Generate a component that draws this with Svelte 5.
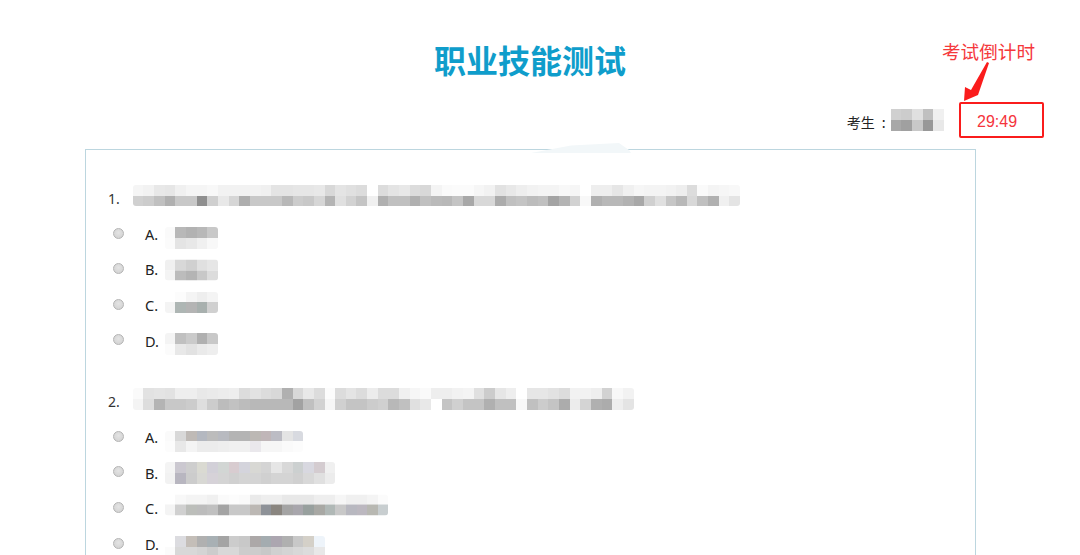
<script lang="ts">
  // mosaic cells are 2-digit greys, or 6-digit hex for the tinted ones
  const questions = [
    {
      no: '1.',
      top: 'f5 f2 e8 e6 f0 f5 f5 f8 f2 f2 f2 f2 f0 e4 e4 e6 e6 e8 d8 e4 e0 dc ff dc e4 e8 dc d8 f4 fa fb fb f6 f2 e2 e8 ee f2 f4 f4 f8 f6 ff ee ee e6 f0 f6 f4 f4 f2 ee dc fa f4 f6 f8',
      bottom: 'd0 cc c0 b0 c8 c8 8f cf e8 d6 ae c8 c8 c8 b8 cc c8 d6 b4 e0 d2 c4 f0 b0 c0 c0 b0 c0 ba b8 c4 a8 d8 d8 ac c0 c4 bc c0 a4 b4 d2 f8 b0 b8 b8 b2 a8 d0 e0 c6 b8 d8 c0 b0 f0 e4',
      options: [
        { letter: 'A.', shift: 5, top: 'fa b8 b2 b8 c8', bottom: 'fb e4 e8 f0 f8' },
        { letter: 'B.', shift: 1.5, top: 'f0 d8 d0 e0 e6', bottom: 'f4 bc b4 c8 dc' },
        { letter: 'C.', shift: -2, top: 'ff fc f4 ee f4', bottom: 'f4 aeb6b4 b4 a8b0ae d0' },
        { letter: 'D.', shift: 4, top: 'f4 c0 ca b0 c8', bottom: 'fb e8 e2 ea ee' },
      ],
    },
    {
      no: '2.',
      top: 'fa e2 e4 e2 ee ee e8 ea ec ee dc e2 dc d8 b0 d8 e8 dc fc dc e4 dc ec dc dc f0 f6 fa ee ee f2 f4 e0 cc e6 ee ff e6 e6 e2 dc f2 f2 ee d2 f8 f2',
      bottom: 'f4 dd b4 c8 c8 cc de cc bc c2 bc b8 b8 b8 b8 a2 c0 d2 f6 d0 c4 c4 cc d0 b8 c0 e0 e8 ff c4 d0 c4 c4 b0 c0 c0 f8 c0 cc c4 ac ec d4 b0 ac ee e4',
      options: [
        { letter: 'A.', shift: 5, top: 'fa d8 bfbab6 b4b8c0 bc b8bac0 b4 b4 bcb8b4 c0b6b8 bcbcc4 e4 d8dae0', bottom: 'fc e8 f4 ec ec ee f0 f0 eae8ec f6 f6 fa fc' },
        { letter: 'B.', shift: 1, top: 'f4 cbc8d0 ce dadad2 d2d0d8 d2d6d4 d8ccd0 d4d4dc d8d8d4 d4 e6 d8 ccd0d0 d8d8e0 d4ccd0 f0', bottom: 'f2 b8b6c0 cc d8d8d4 d6d2d8 d4 d0 d4 d4 d0 d4 d4 d0 d8 e0 ec' },
        { letter: 'C.', shift: -2.5, top: 'ff f8 f4 f4 f0 fa fc fa ea ee ee e8 e8 e8 ee ee f6 f0 f0 f4 fb', bottom: 'f4 d0 bcbeba bc c0 a4 c8 c8 bcb8b4 8e9298 8a8680 a4 a8a6ac 98a09e a8a8a4 b0b8b6 c8 b8b8c0 bcb8c0 b8b8b2 c8ced0' },
        { letter: 'D.', shift: 4, top: 'ff dcdce0 c4beb8 b0 a8b0b4 a4 cc c8 aca8a8 a4acb0 aca6b0 b0 c8 d4d0c8 eef4fa', bottom: 'fb d8 d8 d4 cc d8 d8 cc cc c8 d0 d4 d8 dc e8' },
      ],
    },
  ]

  const examinee = { top: 'd0 cc e0 c0 f0', bottom: 'a8 a0 c8 98 e8' }

  function cells(str: string) {
    return str.split(' ').map((v) => (v.length === 2 ? `#${v}${v}${v}` : `#${v}`))
  }
</script>

{#snippet mosaic(data: { top: string; bottom: string }, square = false)}
  <div class="mosaic" class:mosaic--square={square}>
    <div class="mosaic-row">
      {#each cells(data.top) as color}
        <span class="mosaic-cell" style:background={color}></span>
      {/each}
    </div>
    <div class="mosaic-row">
      {#each cells(data.bottom) as color}
        <span class="mosaic-cell" style:background={color}></span>
      {/each}
    </div>
  </div>
{/snippet}

<div class="page">
  <h1 class="title">职业技能测试</h1>

  <div class="exam-info">
    <span class="examinee">考生 :</span>
    {@render mosaic(examinee, true)}
    <div class="timer">29:49</div>
  </div>

  <div class="callout">
    <span class="callout-text">考试倒计时</span>
    <svg class="callout-arrow" width="30" height="44" viewBox="0 0 30 44">
      <polygon points="25,1 27,2 16,34 2,40 3,26 9,29" fill="#fa1c1c" />
    </svg>
  </div>

  <div class="panel">
    <div class="smudge"></div>
    {#each questions as q}
      <div class="question">
        <div class="question-title">
          <span class="question-no">{q.no}</span>
          {@render mosaic(q)}
        </div>
        {#each q.options as opt}
          <div class="option">
            <span class="radio"></span>
            <span class="option-letter">{opt.letter}</span>
            <div class="option-text" style:transform="translateY({opt.shift}px)">
              {@render mosaic(opt)}
            </div>
          </div>
        {/each}
      </div>
    {/each}
  </div>
</div>

<style>
  :global(body) {
    margin: 0;
    background: #fff;
  }

  .page {
    position: relative;
    height: 555px;
    overflow: hidden;
    font-family: "Noto Sans", "Noto Sans CJK SC", sans-serif;
    color: #333;
  }

  .title {
    margin: 37px 20px 0 0;
    height: 46px;
    line-height: 44px;
    text-align: center;
    font-family: "Noto Sans CJK SC", sans-serif;
    font-size: 32px;
    font-weight: 700;
    color: #0f9dcb;
  }

  .exam-info {
    display: flex;
    justify-content: flex-end;
    align-items: center;
    margin-top: 19px;
    padding-right: 36px;
  }

  .examinee {
    font-family: "Noto Sans CJK SC", sans-serif;
    font-size: 14px;
    line-height: 1;
    padding-top: 4px;
    margin-right: 5px;
    word-spacing: 4px;
    color: #222;
  }

  .timer {
    box-sizing: border-box;
    width: 85px;
    height: 36px;
    margin-left: 15px;
    padding: 2px 0 0 16px;
    border: 2px solid #fa1c1c;
    border-radius: 2px;
    font-family: "Liberation Sans", sans-serif;
    font-size: 16px;
    line-height: 32px;
    color: #f5343c;
  }

  .callout {
    position: absolute;
    top: 39px;
    left: 942px;
    width: 100px;
  }

  .callout-text {
    display: block;
    font-family: "Noto Sans CJK SC", sans-serif;
    font-size: 18.6px;
    line-height: 24px;
    white-space: nowrap;
    color: #f5383c;
  }

  .callout-arrow {
    position: absolute;
    top: 22px;
    left: 20px;
  }

  .panel {
    position: relative;
    box-sizing: border-box;
    width: 891px;
    margin: 11px 0 0 85px;
    padding-top: 35px;
    border: 1px solid #bcd6df;
    background: #fff;
    min-height: 420px;
  }

  .smudge {
    position: absolute;
    top: -7px;
    left: 445px;
    width: 100px;
    height: 10px;
    background: #f2f7f9;
    clip-path: polygon(0 100%, 40% 25%, 88% 0, 98% 70%, 100% 100%);
  }

  .question {
    padding-left: 22px;
    margin-bottom: 30.5px;
  }

  .question-title {
    display: flex;
    align-items: center;
  }

  .question-no {
    width: 24.7px;
    padding-top: 6px;
    font-size: 14px;
    line-height: 1;
    color: #333;
  }

  .option {
    display: flex;
    align-items: center;
    height: 35.6px;
    padding-left: 5px;
  }

  .question-title + .option {
    margin-top: 9px;
  }

  .radio {
    box-sizing: border-box;
    width: 11px;
    height: 11px;
    margin-right: 21px;
    border: 1px solid #b4b4b4;
    border-radius: 50%;
    background: radial-gradient(circle at 50% 40%, #e4e4e4, #cfcfcf);
  }

  .option-letter {
    width: 19.7px;
    padding-top: 2px;
    font-size: 14.5px;
    line-height: 1;
    color: #222;
  }

  .mosaic {
    display: flex;
    flex-direction: column;
    overflow: hidden;
    border-radius: 3px;
  }

  .mosaic--square {
    border-radius: 0;
  }

  .mosaic-row {
    display: flex;
  }

  .mosaic-cell {
    width: 10.67px;
    height: 10.67px;
  }
</style>
